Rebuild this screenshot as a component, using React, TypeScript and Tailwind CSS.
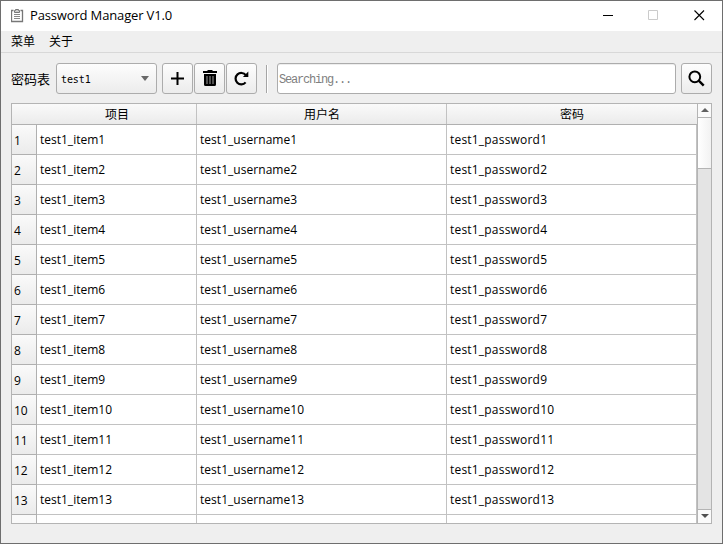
import React from 'react';

const rows = Array.from({ length: 13 }, (_, i) => i + 1);

const btn =
  'flex h-[31px] w-[31px] shrink-0 items-center justify-center rounded-[3px] border border-[#acacac] bg-linear-to-b from-[#fdfdfd] to-[#ececec]';

const headCell =
  'flex h-full items-center justify-center border-r border-[#c2c2c2] pt-[2px] pl-[1px]';

function Row({ n }: { n: number }) {
  return (
    <div className="flex h-[30px] shrink-0">
      <div className="flex w-[25px] items-center border-r border-b border-[#b0b0b0] bg-linear-to-b from-[#fafafa] to-[#ebebeb] pt-[3px] pl-[2px]">
        {n}
      </div>
      <div className="flex w-[160px] items-center border-r border-b border-[#c2c2c2] pt-[1px] pl-[3px]">test1_item{n}</div>
      <div className="flex w-[250px] items-center border-r border-b border-[#c2c2c2] pt-[1px] pl-[3px] tracking-[0.04px]">test1_username{n}</div>
      <div className="flex w-[250px] items-center border-r border-b border-[#c2c2c2] pt-[1px] pl-[3px] tracking-[0.2px]">test1_password{n}</div>
    </div>
  );
}

export default function App() {
  return (
    <div className="flex h-[544px] w-[723px] flex-col overflow-hidden border border-[#6e6e6e] bg-[#efefef] font-['Open_Sans','Noto_Sans_CJK_SC',sans-serif] text-[12px] leading-[16px] text-black">
      <header className="flex h-[30px] shrink-0 items-center bg-white pl-[10px]">
        <svg width="13" height="15" viewBox="0 0 13 15" fill="none" stroke="#777" className="mb-[2px] shrink-0">
          <path d="M2.5 2.5h-2v11h11v-11h-2" strokeWidth="1.3" />
          <path d="M3.5 4.5v-2h1v-1h3v1h1v2z" fill="#ccc" />
          <path d="M3 6.5h6M3 8.5h6M3 10.5h6" stroke="#888" />
        </svg>
        <h1 className="mb-[2px] ml-[6px] text-[13px] tracking-[-0.15px]">Password Manager V1.0</h1>
        <svg width="106" height="12" viewBox="0 0 106 12" fill="none" className="mr-[13px] mb-[2px] ml-auto">
          <path d="M0 6.5h10" stroke="#000" />
          <path d="M45.5 1.5h9v9h-9z" stroke="#cbcbcb" />
          <path d="M91.5 1.5l9.5 9.5M101 1.5l-9.5 9.5" stroke="#000" strokeWidth="1.1" />
        </svg>
      </header>
      <nav className="flex h-[22px] shrink-0 items-center gap-[14px] border-b border-[#d8d8d8] pl-[10px]">
        <span>菜单</span>
        <span>关于</span>
      </nav>
      <div className="flex shrink-0 items-center pt-[10px] pl-[10px]">
        <span className="w-[45px] text-[13px]">密码表</span>
        <div className="flex h-[31px] w-[101px] items-center justify-between rounded-[3px] border border-[#acacac] bg-linear-to-b from-[#fdfdfd] to-[#ececec] pr-[7px] pl-[4px]">
          <span className="pt-[2px] font-['DejaVu_Sans_Mono',monospace] text-[10px] tracking-[-0.1px]">test1</span>
          <svg width="8" height="5" viewBox="0 0 8 5">
            <path d="M0 0h8L4 5z" fill="#686868" />
          </svg>
        </div>
        <div className="ml-[5px] flex gap-[1px]">
          <button className={btn}>
            <svg width="13" height="13" viewBox="0 0 13 13" stroke="#000" strokeWidth="2">
              <path d="M6.5 0v13M0 6.5h13" />
            </svg>
          </button>
          <button className={btn}>
            <svg width="14" height="16" viewBox="0 0 14 16" className="mb-[1px]">
              <path d="M0 1h4l1-1h4l1 1h4v2H0zM1 4h12v10.5q0 1.5-1.5 1.5h-9Q1 16 1 14.5z" />
              <path d="M4 6v8M7 6v8M10 6v8" stroke="#a0a0a0" />
            </svg>
          </button>
          <button className={btn}>
            <svg width="15" height="15" viewBox="0 0 15 15" fill="none" className="mb-[1px]">
              <path d="M11.8 4.2A5.7 5.7 0 1 0 11.6 11.4" stroke="#000" strokeWidth="2.2" />
              <path d="M14.3 .6v5.4H8.9z" fill="#000" />
            </svg>
          </button>
        </div>
        <div className="ml-[9px] h-[28px] w-[2px] border-r border-l border-r-white border-l-[#a5a5a5]" />
        <div className="ml-[9px] flex h-[31px] w-[399px] items-center rounded-[3px] border border-[#acacac] bg-white pt-[2px] pl-[1px] font-['Liberation_Mono',monospace] text-[12px] tracking-[-1.2px] text-[#808080] shadow-[inset_0_1px_0_#eeeeee]">
          Searching...
        </div>
        <button className={`${btn} ml-[5px]`}>
          <svg width="17" height="17" viewBox="0 0 17 17" fill="none" stroke="#000" className="mb-[1px]">
            <circle cx="6.8" cy="6.8" r="5.4" strokeWidth="2" />
            <path d="M10.7 10.7l5 5" strokeWidth="2.4" />
          </svg>
        </button>
      </div>
      <main className="mt-[9px] ml-[10px] flex h-[421px] w-[701px] shrink-0 border border-[#b4b4b4] bg-white">
        <div className="flex w-[685px] flex-col overflow-hidden">
          <div className="flex h-[21px] shrink-0 border-b border-[#b0b0b0] bg-linear-to-b from-[#fafafa] to-[#ebebeb]">
            <div className="w-[25px]" />
            <div className={`${headCell} w-[160px]`}>项目</div>
            <div className={`${headCell} w-[250px]`}>用户名</div>
            <div className="flex h-full w-[250px] items-center justify-center pt-[2px]">密码</div>
          </div>
          {rows.map((n) => (
            <Row key={n} n={n} />
          ))}
          <div className="flex min-h-0 flex-1">
            <div className="w-[25px] border-r border-[#b0b0b0] bg-[#f9f9f9]" />
            <div className="w-[160px] border-r border-[#c2c2c2]" />
            <div className="w-[250px] border-r border-[#c2c2c2]" />
            <div className="w-[250px] border-r border-[#c2c2c2]" />
          </div>
        </div>
        <div className="flex w-[14px] flex-col border-l border-[#b4b4b4] bg-[#e4e4e4]">
          <div className="flex h-[14px] items-center justify-center border-b border-[#b4b4b4] bg-[#fafafa]">
            <svg width="8" height="4" viewBox="0 0 8 4" className="mb-[1px]">
              <path d="M0 4h8L4 0z" fill="#606060" />
            </svg>
          </div>
          <div className="h-[51px] border-b border-[#b4b4b4] bg-linear-to-r from-white to-[#f2f2f2]" />
          <div className="mt-auto flex h-[14px] items-center justify-center border-t border-[#b4b4b4] bg-[#fafafa]">
            <svg width="8" height="4" viewBox="0 0 8 4" className="mb-[1px]">
              <path d="M0 0h8L4 4z" fill="#505050" />
            </svg>
          </div>
        </div>
      </main>
    </div>
  );
}
